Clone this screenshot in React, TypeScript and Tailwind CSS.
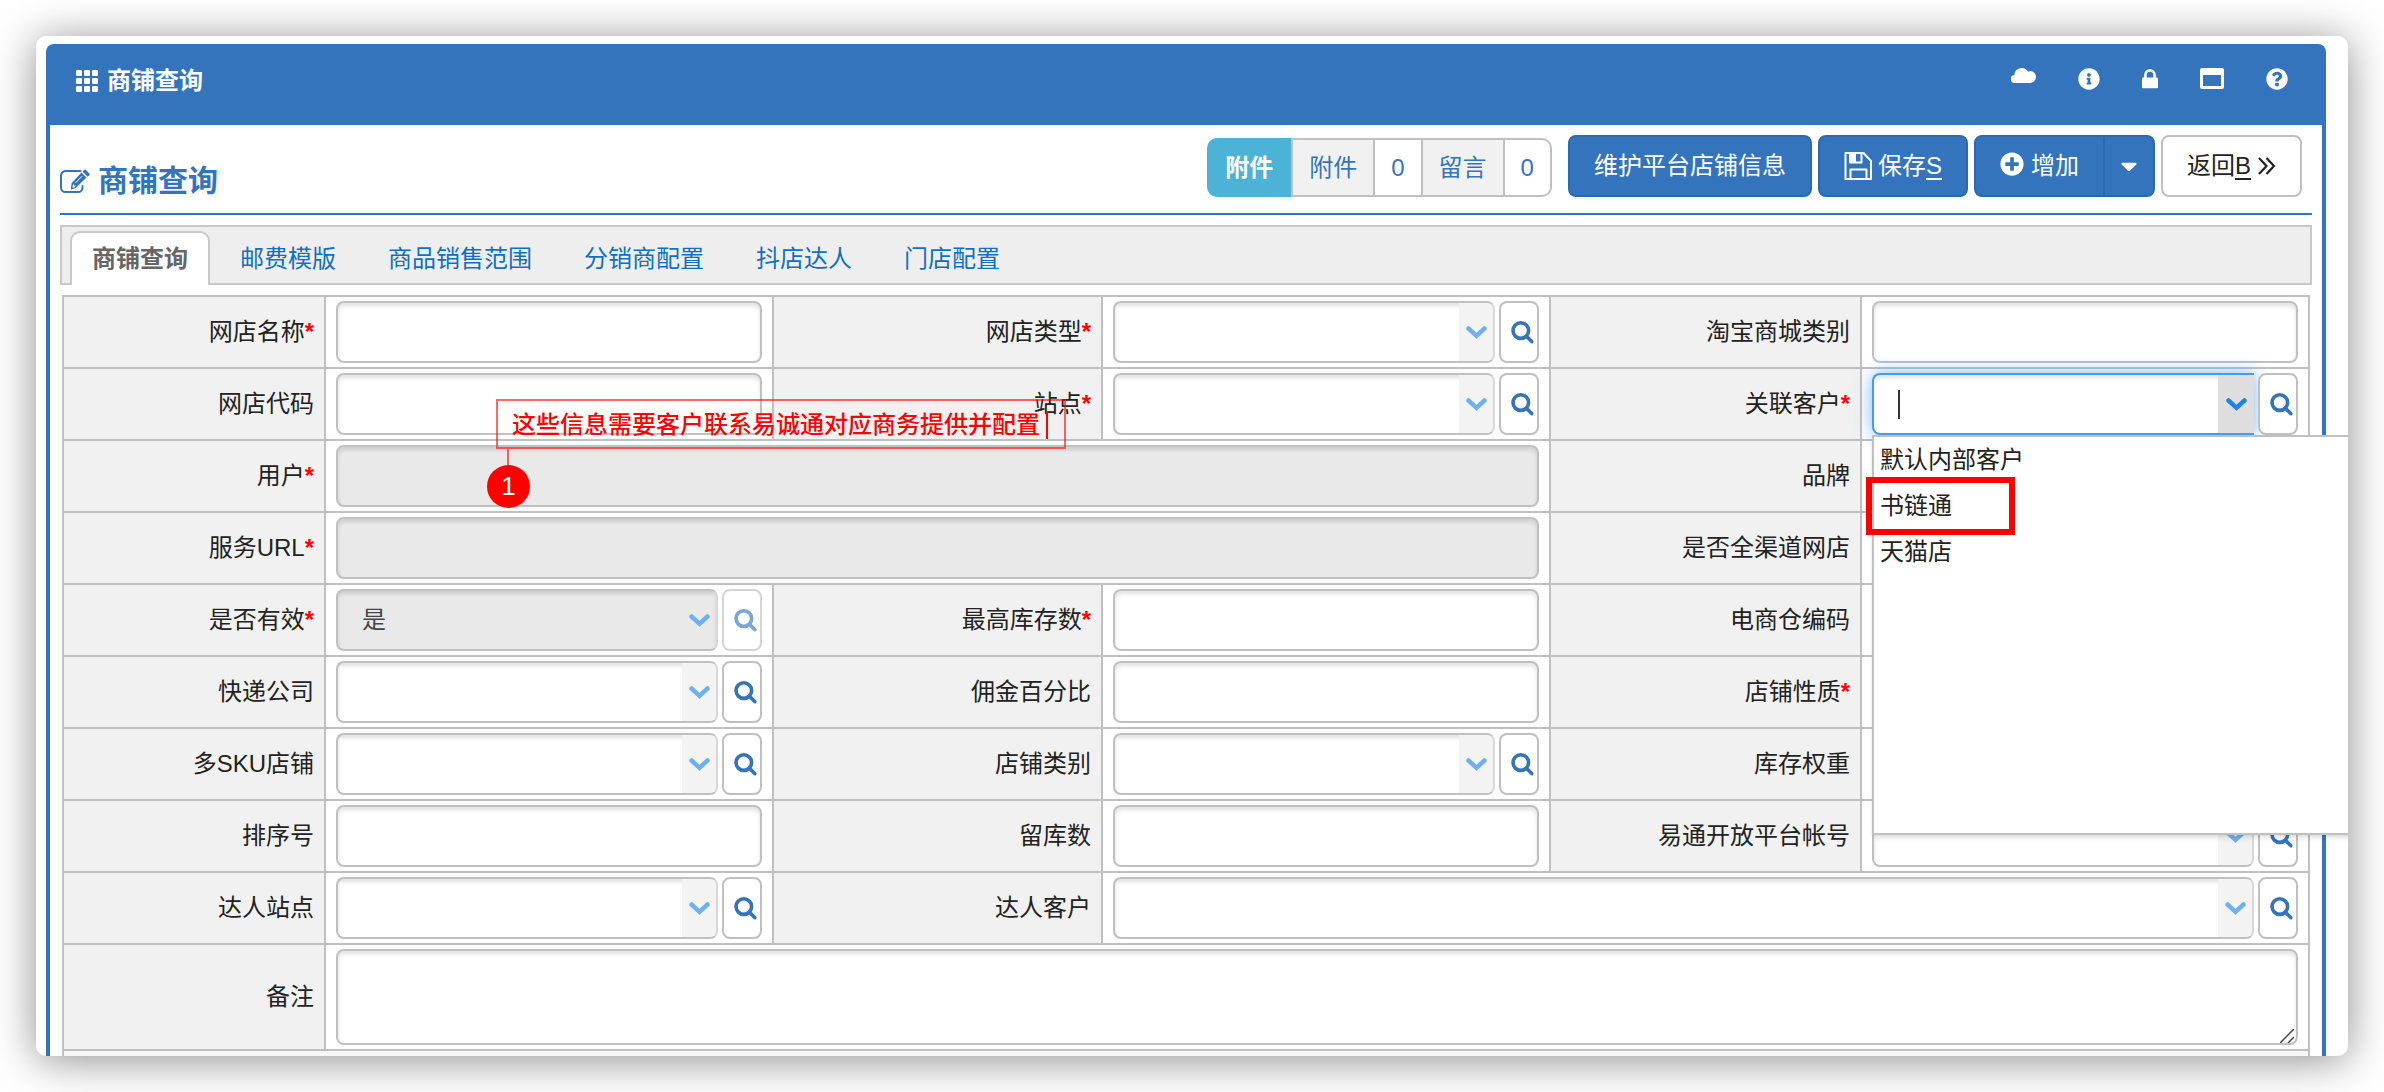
import type { ReactNode } from 'react'
import { FaCaretDown, FaInfoCircle, FaPlusCircle, FaQuestionCircle } from 'react-icons/fa'

type FieldKind = 'text' | 'select' | 'textarea'

interface Field {
  id: string
  label: string
  kind: FieldKind
  required?: boolean
  disabled?: boolean
  value?: string
  open?: boolean
  span?: string
}

const FIELDS: Field[] = [
  { id: 'shopName', label: '网店名称', kind: 'text', required: true },
  { id: 'shopType', label: '网店类型', kind: 'select', required: true },
  { id: 'tmallCategory', label: '淘宝商城类别', kind: 'text' },
  { id: 'shopCode', label: '网店代码', kind: 'text' },
  { id: 'site', label: '站点', kind: 'select', required: true },
  { id: 'customer', label: '关联客户', kind: 'select', required: true, open: true },
  { id: 'user', label: '用户', kind: 'text', required: true, disabled: true, span: 'col-span-3' },
  { id: 'brand', label: '品牌', kind: 'select' },
  { id: 'serviceUrl', label: '服务URL', kind: 'text', required: true, disabled: true, span: 'col-span-3' },
  { id: 'omniChannel', label: '是否全渠道网店', kind: 'select' },
  { id: 'active', label: '是否有效', kind: 'select', required: true, disabled: true, value: '是' },
  { id: 'maxStock', label: '最高库存数', kind: 'text', required: true },
  { id: 'warehouseCode', label: '电商仓编码', kind: 'text' },
  { id: 'express', label: '快递公司', kind: 'select' },
  { id: 'commission', label: '佣金百分比', kind: 'text' },
  { id: 'shopNature', label: '店铺性质', kind: 'select', required: true },
  { id: 'multiSku', label: '多SKU店铺', kind: 'select' },
  { id: 'shopCategory', label: '店铺类别', kind: 'select' },
  { id: 'stockWeight', label: '库存权重', kind: 'text' },
  { id: 'sortNo', label: '排序号', kind: 'text' },
  { id: 'reserved', label: '留库数', kind: 'text' },
  { id: 'openAccount', label: '易通开放平台帐号', kind: 'select' },
  { id: 'talentSite', label: '达人站点', kind: 'select' },
  { id: 'talentCustomer', label: '达人客户', kind: 'select', span: 'col-span-3' },
  { id: 'remark', label: '备注', kind: 'textarea', span: 'col-span-5' },
]

const TABS = ['商铺查询', '邮费模版', '商品销售范围', '分销商配置', '抖店达人', '门店配置']

const CUSTOMERS = ['默认内部客户', '书链通', '天猫店']

function GridIcon() {
  return (
    <svg width="22" height="22" viewBox="0 0 22 22" fill="currentColor">
      {[0, 8, 16].map(y => [0, 8, 16].map(x => (
        <rect key={`${x}-${y}`} x={x} y={y} width="6" height="6" rx="1" />
      )))}
    </svg>
  )
}

function CloudIcon() {
  return (
    <svg width="25" height="16" viewBox="0 0 25 16" fill="currentColor" className="mb-2">
      <path d="M4 16A4 4 0 0 1 3.400 8A7.300 7.300 0 0 1 17 4.700 5.600 5.600 0 0 1 25 10.200 5.800 5.800 0 0 1 19.200 16Z" />
    </svg>
  )
}

function LockIcon() {
  return (
    <svg width="16" height="20" viewBox="0 0 16 20">
      <path d="M3.4 9V6a4.6 4.6 0 0 1 9.2 0v3" fill="none" stroke="currentColor" strokeWidth="2.6" />
      <rect y="8.6" width="16" height="10.6" rx="1" fill="currentColor" />
    </svg>
  )
}

function WindowIcon() {
  return (
    <svg width="24" height="21" viewBox="0 0 24 21" fill="currentColor">
      <path fillRule="evenodd" d="M2 0H22A2 2 0 0 1 24 2V19A2 2 0 0 1 22 21H2A2 2 0 0 1 0 19V2A2 2 0 0 1 2 0ZM3 7V18H21V7Z" />
    </svg>
  )
}

function EditIcon() {
  return (
    <svg width="30" height="25" viewBox="0 0 30 25" fill="none">
      <path d="M20.5 2H5.5A4.5 4.5 0 0 0 1 6.500V18.500A4.500 4.500 0 0 0 5.500 23H18A4.500 4.500 0 0 0 22.500 18.500V17" stroke="currentColor" strokeWidth="2" strokeLinecap="round" />
      <path fillRule="evenodd" fill="currentColor" d="M21.500 3.500 26.500 8.500 15.500 19.300 10.800 20.500 11.600 14ZM13 14.800 12.600 18.700 15 18.200 15.400 16.600 13.800 16.300Z" />
      <path fill="currentColor" d="M22.600 2.400 24 1A1.500 1.500 0 0 1 26 1L29.300 4.400A1.500 1.500 0 0 1 29.300 6.300L27.600 7.700Z" />
      <path d="M15.500 13.800 22 7.300" stroke="#fff" strokeWidth="1" />
    </svg>
  )
}

function SaveIcon() {
  return (
    <svg width="28" height="28" viewBox="0 0 28 28" fill="none" stroke="currentColor" strokeWidth="2" strokeLinejoin="round">
      <path d="M1.500 1H19.500L27 9V27H1.500Z" />
      <path d="M6 1V10.500H17.500V1" />
      <path d="M6.500 2H12V10H6.500Z" fill="currentColor" stroke="none" />
      <path d="M6.500 27V17.500H22.500V27" />
    </svg>
  )
}

function DoubleRightIcon() {
  return (
    <svg width="18" height="18" viewBox="0 0 18 18" fill="none" stroke="currentColor" strokeWidth="2.200">
      <path d="M1 1 8.500 9 1 17M8.500 1 16 9 8.500 17" />
    </svg>
  )
}

function ChevronIcon() {
  return (
    <svg width="21" height="13" viewBox="0 0 21 13" fill="none" stroke="currentColor" strokeWidth="4.500" strokeLinecap="round">
      <path d="M2.500 2.500 10.500 9.800 18.500 2.500" />
    </svg>
  )
}

function SearchIcon() {
  return (
    <svg width="23" height="23" viewBox="0 0 23 23" fill="none" stroke="currentColor" strokeWidth="3.600" strokeLinecap="round">
      <circle cx="9.800" cy="9.600" r="7.800" />
      <path d="M15.900 15.700 20.700 20.600" />
    </svg>
  )
}

function ResizeIcon() {
  return (
    <svg width="14" height="14" viewBox="0 0 14 14" fill="none" stroke="#444" strokeWidth="1.500" className="pointer-events-none absolute right-1 bottom-0.5">
      <path d="M0 14 14 0M8 14 14 8" />
    </svg>
  )
}

function Toolbar() {
  const primary = 'flex h-[62px] items-center border-2 border-[#2a6ab0] bg-[#3474bc] text-white'
  const segment = 'flex h-full items-center border-y-2 border-l-2 border-[#c0c0c0] px-4 text-[#3474bc]'
  return (
    <div className="mr-2.5 flex items-end">
      <div className="mr-4 flex h-[59px] items-center">
        <span className="flex h-full items-center rounded-l-[10px] bg-[#4db3d6] px-[18px] font-bold text-white">附件</span>
        <button type="button" className={`${segment} bg-[#f1f1f1]`}>附件</button>
        <span className={segment}>0</span>
        <button type="button" className={`${segment} bg-[#f1f1f1]`}>留言</button>
        <span className={`${segment} rounded-r-[10px] border-r-2`}>0</span>
      </div>
      <div className="flex items-center gap-1.5">
        <button type="button" className={`${primary} rounded-lg px-6`}>维护平台店铺信息</button>
        <button type="button" className={`${primary} gap-1.5 rounded-lg px-6`}>
          <SaveIcon />
          <span>保存<u className="decoration-2 underline-offset-4">S</u></span>
        </button>
        <div className="flex">
          <button type="button" className={`${primary} gap-[7px] rounded-l-lg px-6`}>
            <FaPlusCircle size={24} className="mb-1" />
            增加
          </button>
          <button type="button" aria-label="更多" className={`${primary} -ml-0.5 w-[52px] justify-center rounded-r-lg`}>
            <FaCaretDown size={26} />
          </button>
        </div>
        <button type="button" className="flex h-[62px] items-center gap-[7px] rounded-lg border-2 border-[#c0c0c0] bg-white px-6">
          <span>返回<u className="decoration-2 underline-offset-4">B</u></span>
          <DoubleRightIcon />
        </button>
      </div>
    </div>
  )
}

function CustomerMenu() {
  return (
    <ul className="absolute top-full left-0 z-20 h-[400px] w-[520px] border-2 border-[#c0c0c0] bg-white shadow-md">
      {CUSTOMERS.map(name => (
        <li key={name} className="relative flex h-[46px] items-center px-1.5">
          {name}
          {name === '书链通' && <span className="absolute -inset-y-1.5 -left-2 w-[149px] border-[6px] border-[#ff0000]" />}
        </li>
      ))}
    </ul>
  )
}

function ComboBox({ field }: { field: Field }) {
  const { id, label, disabled, value, open } = field
  return (
    <div className="relative flex gap-1">
      <div
        className={`relative flex h-[62px] min-w-0 flex-1 overflow-hidden rounded-lg border-2 ${
          open ? 'rounded-r-none border-r-0 border-[#4a9be6] shadow-[0_0_18px_rgba(74,155,230,0.7)]' : 'border-[#c0c0c0] border-r-[#d8d8d8]'
        } ${disabled ? 'bg-[#e9e9e9]' : 'bg-white'}`}
      >
        <select
          id={id}
          disabled={disabled}
          className="min-w-0 flex-1 appearance-none pl-6 text-[#444] shadow-[inset_0_3px_4px_rgba(0,0,0,0.12)] outline-none"
        >
          <option>{value}</option>
        </select>
        <span
          className={`pointer-events-none absolute inset-y-0 right-0 flex items-center justify-center ${
            open ? 'w-9 bg-[#dedede] text-[#1e82e8]' : 'w-[34px] text-[#70b0f0]'
          } ${open || disabled ? '' : 'bg-[#f3f3f3]'}`}
        >
          <ChevronIcon />
        </span>
        {open && <span className="absolute top-[15px] left-6 h-[29px] w-0.5 bg-[#333]" />}
      </div>
      <button
        type="button"
        aria-label={`${label}查询`}
        disabled={disabled}
        className="relative flex h-[62px] w-10 items-center justify-center rounded-lg border-2 border-[#c0c0c0] bg-white pl-1.5 text-[#3474bc] disabled:opacity-65"
      >
        <SearchIcon />
      </button>
      {open && <CustomerMenu />}
    </div>
  )
}

function FieldControl({ field }: { field: Field }) {
  if (field.kind === 'select') return <ComboBox field={field} />

  const box = 'block w-full rounded-lg border-2 border-[#c0c0c0] px-6 shadow-[inset_0_3px_4px_rgba(0,0,0,0.12)] outline-none'
  if (field.kind === 'textarea') {
    return (
      <div className="relative">
        <textarea id={field.id} className={`${box} h-24 resize-none`} />
        <ResizeIcon />
      </div>
    )
  }
  return <input id={field.id} type="text" disabled={field.disabled} className={`${box} h-[62px] disabled:bg-[#e9e9e9]`} />
}

function Cell({ className, children }: { className: string; children?: ReactNode }) {
  return <div className={`border-t-2 border-l-2 border-[#c0c0c0] ${className}`}>{children}</div>
}

function ShopForm() {
  return (
    <form className="relative mx-0.5 mt-2.5 grid grid-cols-[262px_1fr_329px_1fr_311px_1fr] border-r-2 border-[#c0c0c0]">
      {FIELDS.map(field => (
        <div key={field.id} className="contents">
          <Cell className="flex items-center justify-end bg-[#f1f1f1] pr-2.5">
            <label htmlFor={field.id}>
              {field.label}
              {field.required && <span className="font-bold text-[#ff0000]">*</span>}
            </label>
          </Cell>
          <Cell className={`min-w-0 px-2.5 py-1 ${field.span ?? ''}`}>
            <FieldControl field={field} />
          </Cell>
        </div>
      ))}
      <Cell className="col-span-6 h-[7px] bg-[#f7f7f7]" />
      <Callout />
    </form>
  )
}

// numbered note pinned over the form
function Callout() {
  return (
    <div className="absolute top-[104px] left-[434px] text-[#ff0000]">
      <div className="flex h-[50px] items-center gap-1.5 border-2 border-[#ff0000]/60 pt-0.5 pr-4 pl-3.5 font-medium whitespace-nowrap">
        这些信息需要客户联系易诚通对应商务提供并配置
        <span className="h-7 w-0.5 bg-[#ff0000]" />
      </div>
      <div className="ml-[11px] h-4 w-0.5 bg-[#ff0000]/60" />
      <div className="-ml-[9px] flex size-[43px] items-center justify-center rounded-full bg-[#ff0000] text-[26px] text-white">1</div>
    </div>
  )
}

export default function App() {
  return (
    <div className="bg-white p-9 font-['Liberation_Sans','Noto_Sans_CJK_SC',sans-serif] text-2xl text-[#222]">
      <main className="overflow-hidden rounded-[10px] bg-white pt-2 pr-[22px] pl-2.5 shadow-[0_4px_44px_rgba(0,0,0,0.45)]">
        <header className="flex h-[81px] items-center justify-between rounded-t-lg bg-[#3474bc] pr-[38px] pb-2 pl-[30px] text-white">
          <div className="flex items-center gap-[9px]">
            <GridIcon />
            <span className="font-bold">商铺查询</span>
          </div>
          <nav className="flex items-center gap-[42px] pb-1">
            <a href="#cloud" aria-label="云"><CloudIcon /></a>
            <a href="#info" aria-label="信息"><FaInfoCircle size={22} /></a>
            <a href="#lock" aria-label="锁定"><LockIcon /></a>
            <a href="#window" aria-label="窗口"><WindowIcon /></a>
            <a href="#help" aria-label="帮助"><FaQuestionCircle size={22} /></a>
          </nav>
        </header>

        <section className="border-x-4 border-[#3474bc] px-2.5">
          <div className="flex items-end justify-between border-b-2 border-[#3474bc] pt-2.5 pb-4">
            <h1 className="flex items-center gap-2 text-3xl leading-8 font-bold text-[#3474bc]">
              <EditIcon />
              商铺查询
            </h1>
            <Toolbar />
          </div>

          <div role="tablist" className="mt-2.5 flex gap-2 border-2 border-[#c8c8c8] bg-[#eee] pt-1 pl-2">
            {TABS.map((tab, i) => (
              <button
                key={tab}
                type="button"
                role="tab"
                aria-selected={i === 0}
                className={`-mb-0.5 h-[54px] rounded-t-[10px] border-2 border-b-0 px-5 ${
                  i === 0 ? 'border-[#c8c8c8] bg-white font-bold text-[#666]' : 'border-transparent text-[#0f70c0]'
                }`}
              >
                {tab}
              </button>
            ))}
          </div>

          <ShopForm />
        </section>
      </main>
    </div>
  )
}
